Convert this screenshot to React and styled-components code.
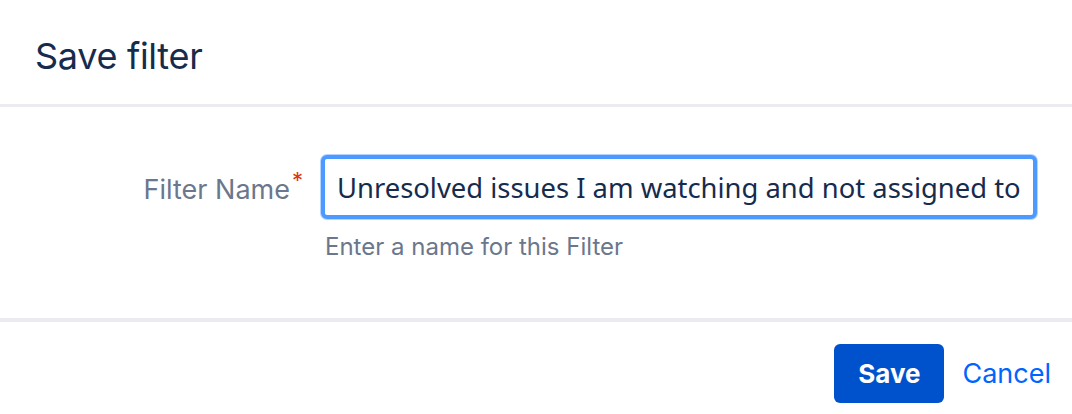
import React from "react";
import styled, { createGlobalStyle } from "styled-components";

const Global = createGlobalStyle`
  html, body { margin: 0; padding: 0; background: #fff; }
  body { font-family: Inter, "Liberation Sans", sans-serif; }
`;

const Dialog = styled.div`
  width: 1072px;
  height: 414px;
  display: flex;
  flex-direction: column;
  background: #fff;
  overflow: hidden;
`;

const Header = styled.header`
  height: 107px;
  box-sizing: border-box;
  padding: 36px 0 0 35px;
  border-bottom: 3px solid #ebecf0;
`;

const Title = styled.h2`
  margin: 0;
  font-family: Inter, "Liberation Sans", sans-serif;
  font-weight: 400;
  font-size: 36px;
  line-height: 40px;
  color: #172b4d;
  letter-spacing: -0.3px;
`;

const Body = styled.div`
  height: 215px;
  box-sizing: border-box;
  padding-top: 48px;
  border-bottom: 4px solid #ebecf0;
`;

const FieldRow = styled.div`
  display: grid;
  grid-template-columns: 303px 716px;
  column-gap: 18px;
  align-items: start;
`;

const Label = styled.label`
  justify-self: end;
  padding-top: 19px;
  font-size: 27px;
  line-height: 32px;
  color: #6b778c;
  display: flex;
  align-items: flex-start;
`;

const Required = styled.span`
  color: #de350b;
  font-size: 22px;
  line-height: 20px;
  margin-left: 2px;
  margin-top: -4px;
`;

const FieldCol = styled.div`
  display: flex;
  flex-direction: column;
`;

const Input = styled.input`
  box-sizing: border-box;
  width: 716px;
  height: 64px;
  border: 4px solid #4c9aff;
  border-radius: 6px;
  box-shadow: 0 0 0 1px #b3d4ff;
  padding: 0 12px;
  font-family: "Noto Sans", "Open Sans", sans-serif;
  font-size: 27.4px;
  color: #172b4d;
  outline: none;
  background: #fff;
`;

const Help = styled.div`
  margin-top: 14px;
  padding-left: 4px;
  font-size: 24px;
  line-height: 28px;
  color: #6b778c;
`;

const Footer = styled.footer`
  flex: 1;
  display: flex;
  justify-content: flex-end;
  align-items: flex-start;
  padding: 22px 21px 0 0;
  gap: 20px;
`;

const PrimaryButton = styled.button`
  width: 110px;
  height: 59px;
  border: none;
  border-radius: 6px;
  background: #0052cc;
  color: #fff;
  font-family: Inter, "Liberation Sans", sans-serif;
  font-weight: 700;
  font-size: 26px;
  cursor: pointer;
`;

const LinkButton = styled.button`
  height: 59px;
  border: none;
  background: none;
  padding: 0;
  margin-left: -2px;
  color: #0065ff;
  font-family: Inter, "Liberation Sans", sans-serif;
  font-size: 27px;
  cursor: pointer;
`;

export default function App() {
  return (
    <>
      <Global />
      <Dialog>
        <Header>
          <Title>Save filter</Title>
        </Header>
        <Body>
          <FieldRow>
            <Label>
              Filter Name<Required>*</Required>
            </Label>
            <FieldCol>
              <Input
                defaultValue="Unresolved issues I am watching and not assigned to"
                readOnly
              />
              <Help>Enter a name for this Filter</Help>
            </FieldCol>
          </FieldRow>
        </Body>
        <Footer>
          <PrimaryButton>Save</PrimaryButton>
          <LinkButton>Cancel</LinkButton>
        </Footer>
      </Dialog>
    </>
  );
}
